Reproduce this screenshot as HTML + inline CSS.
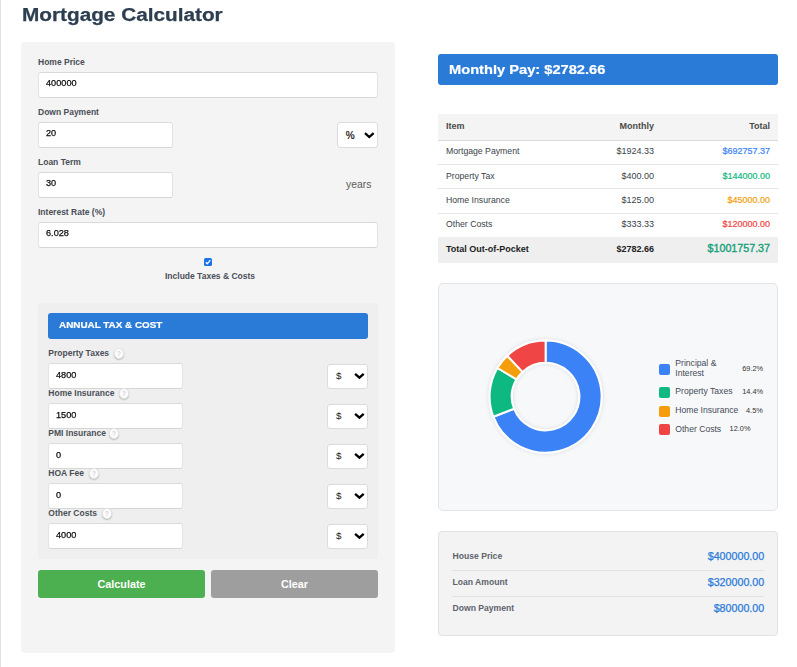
<!DOCTYPE html>
<html><head><meta charset="utf-8">
<style>
*{margin:0;padding:0;box-sizing:border-box}
html,body{width:797px;height:667px;overflow:hidden;background:#fff;font-family:"Liberation Sans",sans-serif;position:relative}
.a{position:absolute}
.t{position:absolute;white-space:nowrap;line-height:1}
#lb{left:0;top:0;width:1px;height:667px;background:#e2e2e2}
#title{left:22.1px;top:5.6px;font-size:18px;font-weight:bold;color:#2c3e50;transform-origin:0 0;transform:scaleX(1.153);-webkit-text-stroke:0.25px #2c3e50}
#lp{left:21px;top:42px;width:374px;height:611px;background:#f4f4f4;border-radius:4px}
.lbl{font-size:8.5px;font-weight:bold;color:#4a4f58}
.inp{position:absolute;background:#fff;border:1px solid #e3e3e3;border-top-color:#dadada;border-bottom-color:#d6d6d6;border-radius:3px}
.iv{position:absolute;font-size:9.5px;color:#0a0a0a;line-height:1;white-space:nowrap}
.sel{position:absolute;background:#fff;border:1px solid #dcdcdc;border-radius:3px}
.chev{position:absolute}
.ivv{font-size:9.6px;transform-origin:0 0;transform:scaleX(0.955);-webkit-text-stroke:0.25px #0a0a0a}
#tp{left:38px;top:303px;width:340px;height:256px;background:#efefef;border-radius:3px}
#th{left:48px;top:313px;width:320px;height:26px;background:#2a7bd8;border-radius:3px}
.btn{position:absolute;top:570px;height:28px;border-radius:3px;color:#fff;font-weight:bold;font-size:10.8px;text-align:center;line-height:28px}
.info{position:absolute;width:10.5px;height:10.5px;border-radius:50%;background:#fdfdfd;border:0.6px solid #e4e4e4;box-shadow:0 1px 1.5px rgba(0,0,0,.22);font-size:7px;line-height:9px;text-align:center;color:#d8d0dc;font-weight:bold}
#mp{left:438px;top:54px;width:340px;height:31px;background:#2a7bd8;border-radius:3px}
.cell{position:absolute;font-size:9px;color:#3a3f4a;white-space:nowrap;line-height:1}
</style></head><body>
<div id="lb" class="a"></div>
<div id="title" class="t">Mortgage Calculator</div>
<div id="lp" class="a"></div>

<!-- Home price -->
<div class="t lbl" style="left:38px;top:58px">Home Price</div>
<div class="inp" style="left:38px;top:72px;width:340px;height:26px"></div>
<div class="iv ivv" style="left:46px;top:78.30px">400000</div>

<div class="t lbl" style="left:38px;top:108px">Down Payment</div>
<div class="inp" style="left:38px;top:122px;width:135px;height:26px"></div>
<div class="iv ivv" style="left:46px;top:128.30px">20</div>
<div class="sel" style="left:337px;top:122px;width:41px;height:26px"></div>
<div class="iv" style="left:345.8px;top:130.9px;font-size:10px;color:#000;-webkit-text-stroke:0.15px #000">%</div>

<div class="t lbl" style="left:38px;top:158px">Loan Term</div>
<div class="inp" style="left:38px;top:172px;width:135px;height:26px"></div>
<div class="iv ivv" style="left:46px;top:178.30px">30</div>
<div class="t" style="left:346px;top:179.6px;font-size:10.4px;color:#5c5c5c">years</div>

<div class="t lbl" style="left:38px;top:208px">Interest Rate (%)</div>
<div class="inp" style="left:38px;top:222px;width:340px;height:26px"></div>
<div class="iv ivv" style="left:46px;top:228.30px">6.028</div>

<div class="a" style="left:204px;top:258px;width:8px;height:8px;background:#1a73e8;border-radius:1.5px"></div>
<div class="t lbl" style="left:165px;top:272px">Include Taxes &amp; Costs</div>

<div id="tp" class="a"></div>
<div id="th" class="a"></div>
<div class="t" style="left:59px;top:319.5px;font-size:9.7px;font-weight:bold;color:#fff;transform-origin:0 0;transform:scaleX(1.02);-webkit-text-stroke:0.2px #fff">ANNUAL TAX &amp; COST</div>

<div class="t lbl" style="left:48.3px;top:348.9px">Property Taxes</div>
<div class="inp" style="left:48px;top:363px;width:135px;height:26px"></div>
<div class="iv ivv" style="left:56px;top:370.30px">4800</div>
<div class="sel" style="left:327px;top:364px;width:41px;height:25px"></div>

<div class="t lbl" style="left:48.3px;top:388.9px">Home Insurance</div>
<div class="inp" style="left:48px;top:403px;width:135px;height:26px"></div>
<div class="iv ivv" style="left:56px;top:410.30px">1500</div>
<div class="sel" style="left:327px;top:404px;width:41px;height:25px"></div>

<div class="t lbl" style="left:48.3px;top:428.9px">PMI Insurance</div>
<div class="inp" style="left:48px;top:443px;width:135px;height:26px"></div>
<div class="iv ivv" style="left:56px;top:450.30px">0</div>
<div class="sel" style="left:327px;top:444px;width:41px;height:25px"></div>

<div class="t lbl" style="left:48.3px;top:468.9px">HOA Fee</div>
<div class="inp" style="left:48px;top:483px;width:135px;height:26px"></div>
<div class="iv ivv" style="left:56px;top:490.30px">0</div>
<div class="sel" style="left:327px;top:484px;width:41px;height:25px"></div>

<div class="t lbl" style="left:48.3px;top:508.9px">Other Costs</div>
<div class="inp" style="left:48px;top:523px;width:135px;height:26px"></div>
<div class="iv ivv" style="left:56px;top:530.30px">4000</div>
<div class="sel" style="left:327px;top:524px;width:41px;height:25px"></div>

<svg class="a" style="left:0;top:0" width="797" height="667"><path d="M365.00 133.20L369.30 137.00L373.60 133.20M355.10 373.90L359.40 377.70L363.70 373.90M355.10 413.90L359.40 417.70L363.70 413.90M355.10 453.90L359.40 457.70L363.70 453.90M355.10 493.90L359.40 497.70L363.70 493.90M355.10 533.90L359.40 537.70L363.70 533.90" fill="none" stroke="#000" stroke-width="2.3"/></svg>
<div class="iv" style="left:336px;top:370.6px;font-size:9.8px;color:#1a1a1a">$</div>
<div class="iv" style="left:336px;top:410.6px;font-size:9.8px;color:#1a1a1a">$</div>
<div class="iv" style="left:336px;top:450.6px;font-size:9.8px;color:#1a1a1a">$</div>
<div class="iv" style="left:336px;top:490.6px;font-size:9.8px;color:#1a1a1a">$</div>
<div class="iv" style="left:336px;top:530.6px;font-size:9.8px;color:#1a1a1a">$</div>
<div class="info" style="left:113.7px;top:348.2px">?</div>
<div class="info" style="left:118.7px;top:388.2px">?</div>
<div class="info" style="left:108.7px;top:428.2px">?</div>
<div class="info" style="left:88.7px;top:468.2px">?</div>
<div class="info" style="left:101.7px;top:508.2px">?</div>
<svg class="a" style="left:204px;top:258px" width="8" height="8"><path d="M1.8 4.3L3.3 5.8L6.3 2.2" fill="none" stroke="#fff" stroke-width="1.3"/></svg>
<div class="btn" style="left:38px;width:167px;background:#4caf50">Calculate</div>
<div class="btn" style="left:211px;width:167px;background:#9e9e9e">Clear</div>

<!-- right -->
<div id="mp" class="a"></div>
<div class="t" style="left:448.9px;top:64px;font-size:12.8px;font-weight:bold;color:#fff;transform-origin:0 0;transform:scaleX(1.145);-webkit-text-stroke:0.2px #fff">Monthly Pay: $2782.66</div>

<div class="a" style="left:438px;top:114px;width:340px;height:26.8px;background:#f4f4f4;border-bottom:1px solid #dadada"></div>
<div class="cell" style="left:446px;top:121.95px;font-weight:bold;color:#4a4a4a">Item</div>
<div class="cell" style="right:143px;top:121.95px;font-weight:bold;color:#4a4a4a">Monthly</div>
<div class="cell" style="right:27px;top:121.95px;font-weight:bold;color:#4a4a4a">Total</div>
<div class="a" style="left:438px;top:163.8px;width:340px;height:1px;background:#e6e6e6"></div>
<div class="a" style="left:438px;top:188.0px;width:340px;height:1px;background:#e6e6e6"></div>
<div class="a" style="left:438px;top:212.5px;width:340px;height:1px;background:#e6e6e6"></div>
<div class="cell" style="left:446px;top:146.95px;font-size:8.7px">Mortgage Payment</div>
<div class="cell" style="right:143px;top:146.95px">$1924.33</div>
<div class="cell" style="right:27px;top:146.95px;color:#3b82f6;-webkit-text-stroke:0.2px #3b82f6">$692757.37</div>
<div class="cell" style="left:446px;top:171.85px;font-size:8.7px">Property Tax</div>
<div class="cell" style="right:143px;top:171.85px">$400.00</div>
<div class="cell" style="right:27px;top:171.85px;color:#10b981;-webkit-text-stroke:0.2px #10b981">$144000.00</div>
<div class="cell" style="left:446px;top:195.85px;font-size:8.7px">Home Insurance</div>
<div class="cell" style="right:143px;top:195.55px">$125.00</div>
<div class="cell" style="right:27px;top:195.55px;color:#f59e0b;-webkit-text-stroke:0.2px #f59e0b">$45000.00</div>
<div class="cell" style="left:446px;top:220.15px;font-size:8.7px">Other Costs</div>
<div class="cell" style="right:143px;top:219.85px">$333.33</div>
<div class="cell" style="right:27px;top:219.85px;color:#ef4444;-webkit-text-stroke:0.2px #ef4444">$120000.00</div>
<div class="a" style="left:438px;top:237.2px;width:340px;height:25.6px;background:#efefef"></div>
<div class="cell" style="left:446px;top:244.75px;font-weight:bold;color:#222">Total Out-of-Pocket</div>
<div class="cell" style="right:143px;top:244.75px;font-weight:bold;color:#222">$2782.66</div>
<div class="cell" style="right:27px;top:243.14px;font-size:10.7px;color:#13a078;-webkit-text-stroke:0.35px #13a078">$1001757.37</div>
<div class="a" style="left:438px;top:283px;width:340px;height:227.5px;background:#f7f8fa;border:1px solid #e2e4e8;border-radius:5px"></div>
<svg class="a" style="left:0;top:0" width="797" height="667" viewBox="0 0 797 667"><defs><filter id="sh" x="-20%" y="-20%" width="140%" height="140%"><feDropShadow dx="0" dy="0" stdDeviation="2" flood-color="#000" flood-opacity="0.12"/></filter></defs><g filter="url(#sh)"><path d="M545.60 340.60A56 56 0 1 1 493.34 416.71L514.05 408.74A33.8 33.8 0 1 0 545.60 362.80Z" fill="#3b82f6" stroke="#fff" stroke-width="2" stroke-linejoin="round"/><path d="M493.34 416.71A56 56 0 0 1 497.45 368.01L516.54 379.34A33.8 33.8 0 0 0 514.05 408.74Z" fill="#10b981" stroke="#fff" stroke-width="2" stroke-linejoin="round"/><path d="M497.45 368.01A56 56 0 0 1 507.32 355.73L522.50 371.93A33.8 33.8 0 0 0 516.54 379.34Z" fill="#f59e0b" stroke="#fff" stroke-width="2" stroke-linejoin="round"/><path d="M507.32 355.73A56 56 0 0 1 545.60 340.60L545.60 362.80A33.8 33.8 0 0 0 522.50 371.93Z" fill="#ef4444" stroke="#fff" stroke-width="2" stroke-linejoin="round"/></g></svg>
<div class="a" style="left:659.3px;top:363.9px;width:11px;height:11px;background:#3b82f6;border-radius:2px"></div>
<div class="a" style="left:659.3px;top:387.2px;width:11px;height:11px;background:#10b981;border-radius:2px"></div>
<div class="a" style="left:659.3px;top:406px;width:11px;height:11px;background:#f59e0b;border-radius:2px"></div>
<div class="a" style="left:659.3px;top:424px;width:11px;height:11px;background:#ef4444;border-radius:2px"></div>
<div class="cell" style="left:675.3px;top:359.02px;font-size:8.6px;color:#454b57">Principal &amp;</div>
<div class="cell" style="left:675.3px;top:368.82px;font-size:8.6px;color:#454b57">Interest</div>
<div class="cell" style="left:675.3px;top:387.22px;font-size:8.6px;color:#454b57">Property Taxes</div>
<div class="cell" style="left:675.3px;top:406.12px;font-size:8.6px;color:#454b57">Home Insurance</div>
<div class="cell" style="left:675.3px;top:424.82px;font-size:8.6px;color:#454b57">Other Costs</div>
<div class="cell" style="left:742.2px;top:365.24px;font-size:7.4px;color:#333">69.2%</div>
<div class="cell" style="left:742.2px;top:387.94px;font-size:7.4px;color:#333">14.4%</div>
<div class="cell" style="left:746px;top:406.74px;font-size:7.4px;color:#333">4.5%</div>
<div class="cell" style="left:729.6px;top:425.34px;font-size:7.4px;color:#333">12.0%</div>
<div class="a" style="left:438px;top:531px;width:340px;height:104.6px;background:#f3f3f3;border:1px solid #e2e2e2;border-radius:4px"></div>
<div class="a" style="left:452px;top:569.7px;width:312px;height:1px;background:#dfe1e4"></div>
<div class="a" style="left:452px;top:595.8px;width:312px;height:1px;background:#dfe1e4"></div>
<div class="cell" style="left:452.5px;top:551.85px;font-size:8.6px;font-weight:bold;color:#5d636c">House Price</div>
<div class="cell" style="right:32.799999999999955px;top:550.74px;font-size:10.7px;color:#2a7bd8;-webkit-text-stroke:0.25px #2a7bd8">$400000.00</div>
<div class="cell" style="left:452.5px;top:577.85px;font-size:8.6px;font-weight:bold;color:#5d636c">Loan Amount</div>
<div class="cell" style="right:32.799999999999955px;top:576.74px;font-size:10.7px;color:#2a7bd8;-webkit-text-stroke:0.25px #2a7bd8">$320000.00</div>
<div class="cell" style="left:452.5px;top:603.95px;font-size:8.6px;font-weight:bold;color:#5d636c">Down Payment</div>
<div class="cell" style="right:32.799999999999955px;top:602.84px;font-size:10.7px;color:#2a7bd8;-webkit-text-stroke:0.25px #2a7bd8">$80000.00</div>
</body></html>
